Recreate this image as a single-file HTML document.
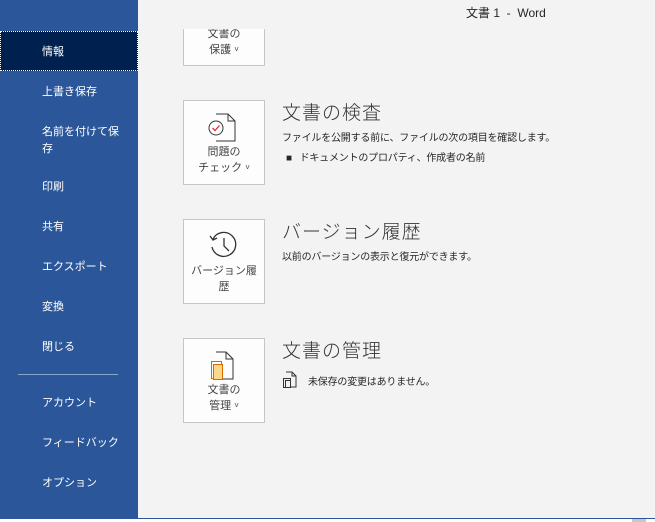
<!DOCTYPE html>
<html><head><meta charset="utf-8"><style>
*{margin:0;padding:0;box-sizing:border-box}
body{width:655px;height:522px;overflow:hidden;background:#f3f3f3;font-family:"Liberation Sans","Noto Sans CJK JP",sans-serif;position:relative;color:#262626}
.side{position:absolute;left:0;top:0;width:138px;height:518px;background:#2b579a}
.it{position:absolute;left:42px;color:#fff;font-size:11px;line-height:17px}
.sel{position:absolute;left:0;top:31px;width:138px;height:40px;background:#002050;border:1px dotted #fff}
.hr{position:absolute;left:18px;top:374px;width:100px;height:1px;background:#8aa6cc}
.bottom{position:absolute;left:0;top:518px;width:655px;height:4px;background:#fff;border-top:1px solid #2b579a}
.title{position:absolute;left:466px;top:4px;font-size:12px;color:#262626}
.box{position:absolute;left:183px;width:82px;background:#fdfdfd;border:1px solid #c6c6c6;text-align:center;font-size:11px;line-height:16px;color:#444}
.h{position:absolute;left:282px;font-size:19px;color:#333;letter-spacing:1px;font-family:"Noto Sans CJK JP",sans-serif;font-weight:300}
.d{position:absolute;left:282px;font-size:10px;color:#262626;letter-spacing:-0.2px}
.v{font-size:8px;vertical-align:1px}
</style></head><body>
<div class="side">
<div class="sel"></div>
<div class="it" style="top:44px">情報</div>
<div class="it" style="top:84px">上書き保存</div>
<div class="it" style="top:124px">名前を付けて保<br>存</div>
<div class="it" style="top:179px">印刷</div>
<div class="it" style="top:219px">共有</div>
<div class="it" style="top:259px">エクスポート</div>
<div class="it" style="top:299px">変換</div>
<div class="it" style="top:339px">閉じる</div>
<div class="hr"></div>
<div class="it" style="top:395px">アカウント</div>
<div class="it" style="top:435px">フィードバック</div>
<div class="it" style="top:475px">オプション</div>
</div>
<div class="title">文書 1 &nbsp;- &nbsp;Word</div>
<div class="box" style="top:20px;height:46px;padding-top:5px;clip-path:inset(9px 0 0 0)">文書の<br>保護 <span class="v">˅</span></div>
<div class="box" style="top:100px;height:85px;padding-top:43px">問題の<br>チェック <span class="v">˅</span>
<svg style="position:absolute;left:22px;top:12px" width="34" height="30" viewBox="0 0 34 30"><path d="M10 1h12l7 7v20H10" fill="none" stroke="#333"/><path d="M22 1v7h7" fill="none" stroke="#333"/><circle cx="10" cy="15" r="7" fill="#fff" stroke="#333"/><path d="M6.5 15l2.5 2.5 4.5-5" fill="none" stroke="#e03030" stroke-width="1.3"/></svg></div>
<div class="h" style="top:98px">文書の検査</div>
<div class="d" style="top:129px">ファイルを公開する前に、ファイルの次の項目を確認します。</div>
<div class="d" style="top:149px;left:286px">■ &nbsp;&nbsp;ドキュメントのプロパティ、作成者の名前</div>
<div class="box" style="top:219px;height:85px;padding-top:43px">バージョン履<br>歴
<svg style="position:absolute;left:24px;top:10px" width="32" height="30" viewBox="0 0 32 30"><path d="M5 9A12 12 0 1 1 4 17" fill="none" stroke="#333" stroke-width="1.3"/><path d="M2 6l3 4 4-2" fill="none" stroke="#333" stroke-width="1.3"/><path d="M16 8v8l5 5" fill="none" stroke="#333" stroke-width="1.3"/></svg></div>
<div class="h" style="top:217px">バージョン履歴</div>
<div class="d" style="top:248px">以前のバージョンの表示と復元ができます。</div>
<div class="box" style="top:338px;height:85px;padding-top:43px">文書の<br>管理 <span class="v">˅</span>
<svg style="position:absolute;left:26px;top:12px" width="28" height="30" viewBox="0 0 28 30"><path d="M6 1h10l7 7v20H10" fill="none" stroke="#333"/><path d="M16 1v7h7" fill="none" stroke="#333"/><rect x="1.5" y="10.5" width="10" height="17" fill="none" stroke="#d86a00"/><rect x="3.5" y="13.5" width="9" height="15" fill="#fcd98a" stroke="#d86a00"/></svg></div>
<div class="h" style="top:336px">文書の管理</div>
<svg style="position:absolute;left:282px;top:371px" width="16" height="17" viewBox="0 0 16 17"><path d="M4 1h6l4 4v11H9" fill="none" stroke="#333"/><path d="M10 1v4h4" fill="none" stroke="#333"/><rect x="1.5" y="7.5" width="7" height="9" fill="none" stroke="#333"/><rect x="3.5" y="9.5" width="5" height="7" fill="none" stroke="#333"/></svg>
<div class="d" style="top:373px;left:308px">未保存の変更はありません。</div>
<div class="bottom"></div>
<div style="position:absolute;left:632px;top:519px;width:14px;height:3px;background:#c8c8c8"></div>
</body></html>
